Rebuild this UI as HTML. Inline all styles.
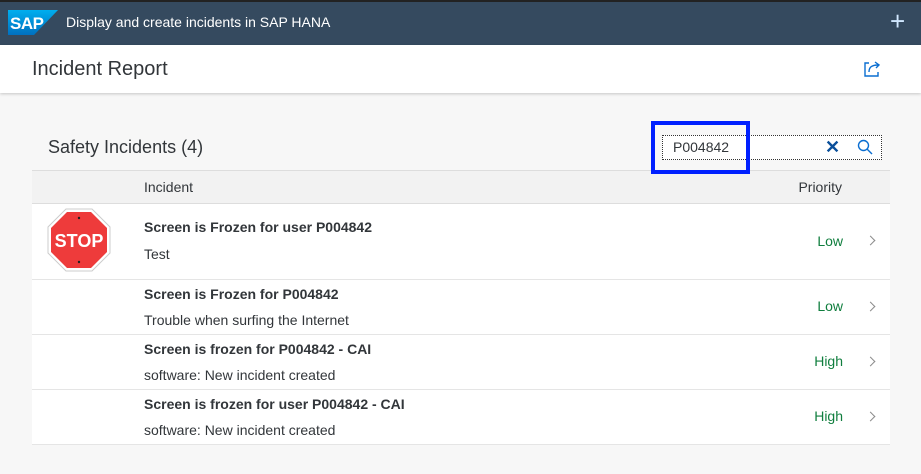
<!DOCTYPE html>
<html><head><meta charset="utf-8"><style>
*{box-sizing:border-box;margin:0;padding:0}
body{width:921px;height:474px;overflow:hidden;background:#f7f7f7;font-family:"Liberation Sans",sans-serif;color:#32363a;position:relative}
.shell{position:absolute;left:0;top:0;width:921px;height:45px;background:#354a5f;border-top:2px solid #222}
.hdr{position:absolute;left:0;top:45px;width:921px;height:48px;background:#fff;box-shadow:0 1px 3px rgba(0,0,0,.2)}
.abs{position:absolute}
.row{position:absolute;left:32px;width:858px;background:#fff;border-bottom:1px solid #e5e5e5}
.t{position:absolute;left:112px;font-size:14px}
.b{font-weight:bold}
.pr{position:absolute;right:47px;font-size:14px;color:#107e3e}
.ch{position:absolute;right:16px;width:7px;height:7px;border-right:1px solid #8c8c8c;border-top:1px solid #8c8c8c;transform:rotate(45deg)}
</style></head><body>
<div class="shell">
 <svg class="abs" style="left:8px;top:8px" width="50" height="25" viewBox="0 0 50 25"><defs><linearGradient id="g" x1="0" y1="0" x2="0" y2="1"><stop offset="0" stop-color="#00aeef"/><stop offset="1" stop-color="#0070c0"/></linearGradient></defs><polygon points="0,0 50,0 26,25 0,25" fill="url(#g)"/><text x="2" y="19" font-family="Liberation Sans" font-weight="bold" font-size="17" fill="#fff" letter-spacing="-0.5">SAP</text></svg>
 <div class="abs" style="left:66px;top:12px;color:#fff;font-size:14px">Display and create incidents in SAP HANA</div>
 <div class="abs" style="left:890px;top:4px;color:#d1e8ff;font-size:26px;font-weight:300">+</div>
</div>
<div class="hdr">
 <div class="abs" style="left:32px;top:13px;font-size:20px;color:#32363a">Incident Report</div>
 <svg class="abs" style="left:864px;top:15px" width="18" height="17" viewBox="0 0 18 17" fill="none" stroke="#0a6ed1" stroke-width="1.4"><path d="M5 3H1v13h13v-4"/><path d="M5 12c0-5 3-7 9-7"/><path d="M11 2l4 3-3 3"/></svg>
</div>
<div class="abs" style="left:48px;top:137px;font-size:18px">Safety Incidents (4)</div>
<div class="abs" style="left:32px;top:170px;width:858px;height:34px;background:#f2f2f2;border-top:1px solid #ddd;border-bottom:1px solid #ddd">
 <div class="abs" style="left:112px;top:8px;font-size:14px">Incident</div>
 <div class="abs" style="right:48px;top:8px;font-size:14px">Priority</div>
</div>
<div class="abs" style="left:662px;top:135px;width:220px;height:25px;background:#fff;border:1px dotted #333"></div>
<div class="abs" style="left:673px;top:139px;font-size:14px">P004842</div>
<div class="abs" style="left:825px;top:137px;font-size:18px;color:#0a4f9a;font-weight:bold">✕</div>
<svg class="abs" style="left:857px;top:139px" width="16" height="16" viewBox="0 0 16 16" fill="none" stroke="#0a6ed1" stroke-width="1.4"><circle cx="6.5" cy="6.5" r="5"/><path d="M10 10l5 5"/></svg>
<div class="abs" style="left:651px;top:121px;width:99px;height:53px;border:4px solid #0020ff;z-index:5"></div>
<div class="row" style="top:204px;height:76px">
 <svg class="abs" style="left:15px;top:4px" width="64" height="64" viewBox="0 0 64 64"><polygon points="19,1 45,1 63,19 63,45 45,63 19,63 1,45 1,19" fill="#fff" stroke="#ccc"/><polygon points="20,4 44,4 60,20 60,44 44,60 20,60 4,44 4,20" fill="#ee3b3b"/><circle cx="32" cy="10" r="1.2" fill="#222"/><circle cx="32" cy="54" r="1.2" fill="#222"/><text x="32" y="39" text-anchor="middle" font-family="Liberation Sans" font-weight="bold" font-size="18" fill="#fff">STOP</text></svg>
 <div class="t b" style="top:15px">Screen is Frozen for user P004842</div>
 <div class="t" style="top:42px">Test</div>
 <div class="pr" style="top:29px">Low</div><div class="ch" style="top:33px"></div>
</div>
<div class="row" style="top:280px;height:55px">
 <div class="t b" style="top:6px">Screen is Frozen for P004842</div>
 <div class="t" style="top:32px">Trouble when surfing the Internet</div>
 <div class="pr" style="top:18px">Low</div><div class="ch" style="top:23px"></div>
</div>
<div class="row" style="top:335px;height:55px">
 <div class="t b" style="top:6px">Screen is frozen for P004842 - CAI</div>
 <div class="t" style="top:32px">software: New incident created</div>
 <div class="pr" style="top:18px">High</div><div class="ch" style="top:23px"></div>
</div>
<div class="row" style="top:390px;height:55px">
 <div class="t b" style="top:6px">Screen is frozen for user P004842 - CAI</div>
 <div class="t" style="top:32px">software: New incident created</div>
 <div class="pr" style="top:18px">High</div><div class="ch" style="top:23px"></div>
</div>
</body></html>
